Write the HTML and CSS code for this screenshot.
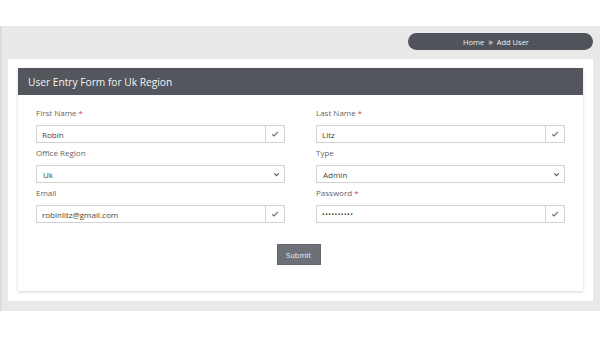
FILE: index.html
```html
<!DOCTYPE html>
<html lang="en">
<head>
  <meta charset="UTF-8" />
  <title>Add User</title>
  <link rel="stylesheet" href="styles.css">
</head>
<body>
  <div class="top-space"></div>

  <div class="page">
    <div class="crumb-row">
      <div class="crumb">Home <span class="crumb-sep">&raquo;</span> Add User</div>
    </div>

    <div class="panel">
      <div class="card">
        <div class="card-head">User Entry Form for Uk Region</div>
        <form class="card-body">
          <div class="grid">
            <div class="field">
              <label>First Name <span class="req">*</span></label>
              <div class="input-group">
                <input type="text" value="Robin">
                <span class="addon"><svg width="8" height="8" viewBox="0 0 8 8"><path d="M1.2 4.2 L3.1 6 L6.8 2" fill="none" stroke="#777" stroke-width="1.2"/></svg></span>
              </div>
            </div>
            <div class="field">
              <label>Last Name <span class="req">*</span></label>
              <div class="input-group">
                <input type="text" value="Litz">
                <span class="addon"><svg width="8" height="8" viewBox="0 0 8 8"><path d="M1.2 4.2 L3.1 6 L6.8 2" fill="none" stroke="#777" stroke-width="1.2"/></svg></span>
              </div>
            </div>
            <div class="field">
              <label>Office Region</label>
              <div class="select">
                <span>Uk</span>
                <svg width="7" height="7" viewBox="0 0 8 8"><path d="M1.5 2.8 L4 5.3 L6.5 2.8" fill="none" stroke="#555" stroke-width="1.3"/></svg>
              </div>
            </div>
            <div class="field">
              <label>Type</label>
              <div class="select">
                <span>Admin</span>
                <svg width="7" height="7" viewBox="0 0 8 8"><path d="M1.5 2.8 L4 5.3 L6.5 2.8" fill="none" stroke="#555" stroke-width="1.3"/></svg>
              </div>
            </div>
            <div class="field">
              <label>Email</label>
              <div class="input-group">
                <input type="text" value="robinlitz@gmail.com">
                <span class="addon"><svg width="8" height="8" viewBox="0 0 8 8"><path d="M1.2 4.2 L3.1 6 L6.8 2" fill="none" stroke="#777" stroke-width="1.2"/></svg></span>
              </div>
            </div>
            <div class="field">
              <label>Password <span class="req">*</span></label>
              <div class="input-group">
                <span class="dots">&bull;&bull;&bull;&bull;&bull;&bull;&bull;&bull;&bull;&bull;</span>
                <span class="addon"><svg width="8" height="8" viewBox="0 0 8 8"><path d="M1.2 4.2 L3.1 6 L6.8 2" fill="none" stroke="#777" stroke-width="1.2"/></svg></span>
              </div>
            </div>
          </div>
          <div class="actions">
            <button type="button" class="submit-btn">Submit</button>
          </div>
        </form>
      </div>
    </div>
  </div>
</body>
</html>
```

FILE: styles.css
```css
/* --- Core & Layout --- */
html, body {
  margin: 0;
}
body {
  font-family: 'Open Sans', 'Noto Sans', sans-serif;
  background: #fff;
  color: #555;
  -webkit-font-smoothing: antialiased;
}
.top-space {
  height: 26px;
}
.page {
  background: #e9e9e9;
  border-left: 2px solid #dcdcdc;
  padding: 7px 7px 10px 6px;
  opacity: 0.999; /* grey text smoothing, like the original */
}

/* --- Breadcrumb --- */
.crumb-row {
  display: flex;
  justify-content: flex-end;
  margin-bottom: 9px;
}
.crumb {
  width: 185px;
  height: 17px;
  box-sizing: border-box;
  padding-right: 9px;
  background: #50535a;
  border-radius: 9px;
  color: #f2f2f2;
  font-size: 7.5px;
  display: flex;
  align-items: center;
  justify-content: center;
  gap: 3px;
}
.crumb-sep {
  font-size: 9px;
  line-height: 1;
  margin: 0 1px;
}

/* --- Panel & Card --- */
.panel {
  background: #fff;
  padding: 9px 10px 10px 10px;
}
.card {
  background: #fff;
  box-shadow: 0 1px 3px rgba(0, 0, 0, 0.18);
}
.card-head {
  background: #53565c;
  color: #f4f4f4;
  height: 27px;
  display: flex;
  align-items: center;
  padding-left: 10px;
  font-size: 10.2px;
}
.card-body {
  padding: 13px 18px 26px;
  margin: 0;
}
.grid {
  display: grid;
  grid-template-columns: 1fr 1fr;
  column-gap: 31px;
  row-gap: 5px;
}
.field label {
  display: block;
  font-size: 8px;
  color: #666;
  height: 17px;
  line-height: 10px;
}
.req {
  color: #e03a3a;
}

/* --- Inputs --- */
.input-group, .select {
  display: flex;
  height: 18px;
  border: 1px solid #d2d2d2;
  box-sizing: border-box;
  background: #fff;
}
.input-group input, .dots {
  flex: 1;
  min-width: 0;
  border: none;
  outline: none;
  padding: 0 5px;
  font-family: inherit;
  font-size: 8px;
  color: #444;
  background: transparent;
}
.dots {
  display: flex;
  align-items: center;
  font-size: 7px;
  letter-spacing: 0.5px;
}
.addon {
  width: 18px;
  border-left: 1px solid #d2d2d2;
  display: flex;
  align-items: center;
  justify-content: center;
}
.select {
  align-items: center;
  justify-content: space-between;
  padding: 0 4px 0 6px;
  font-size: 8px;
  color: #444;
}

/* --- Submit --- */
.actions {
  display: flex;
  justify-content: center;
  margin-top: 21px;
  padding-right: 4px;
}
.submit-btn {
  width: 44px;
  height: 21px;
  background: #6d7077;
  border: 1px solid #63666c;
  color: #eee;
  font-family: inherit;
  font-size: 7.5px;
  padding: 0;
}
```
